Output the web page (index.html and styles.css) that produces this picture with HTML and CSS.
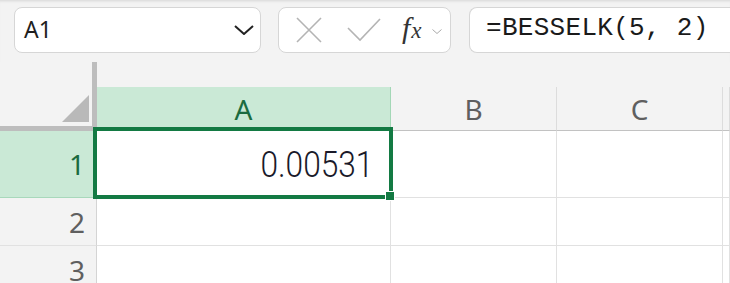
FILE: index.html
```html
<!DOCTYPE html>
<html lang="en">
<head>
    <meta charset="UTF-8">
    <title>BESSELK</title>
    <link rel="stylesheet" href="styles.css">
</head>
<body>
    <div class="toolbar">
        <div class="name-box">
            <span>A1</span>
            <svg class="chevron" viewBox="0 0 20 10" width="20" height="10">
                <path d="M1 1l9 8 9-8" stroke="#222" stroke-width="2" fill="none"/>
            </svg>
        </div>
        <div class="fx-buttons">
            <svg viewBox="0 0 26 26" width="26" height="26">
                <path d="M1 1l24 24M25 1L1 25" stroke="#b4b4b4" stroke-width="1.6" fill="none"/>
            </svg>
            <svg viewBox="0 0 34 24" width="34" height="24">
                <path d="M1 10l12 12L33 1" stroke="#b4b4b4" stroke-width="1.6" fill="none"/>
            </svg>
            <span class="fx"><i>f</i><span class="fx-x">x</span></span>
            <svg class="small-chevron" viewBox="0 0 10 5" width="10" height="5">
                <path d="M0.5 0.5l4.5 4 4.5-4" stroke="#aaa" stroke-width="1" fill="none"/>
            </svg>
        </div>
        <div class="formula-box">=BESSELK(5, 2)</div>
    </div>

    <div class="grid">
        <div class="corner"><div class="triangle"></div></div>
        <div class="col-head active">A</div>
        <div class="col-head">B</div>
        <div class="col-head">C</div>
        <div class="col-head"></div>

        <div class="row-head active">1</div>
        <div class="cell selected">
            <span class="value">0.00531</span>
            <div class="selection"><div class="handle"></div></div>
        </div>
        <div class="cell"></div>
        <div class="cell"></div>
        <div class="cell"></div>

        <div class="row-head">2</div>
        <div class="cell"></div>
        <div class="cell"></div>
        <div class="cell"></div>
        <div class="cell"></div>

        <div class="row-head">3</div>
        <div class="cell"></div>
        <div class="cell"></div>
        <div class="cell"></div>
        <div class="cell"></div>
    </div>
</body>
</html>
```

FILE: styles.css
```css
* {
    box-sizing: border-box;
}

body {
    margin: 0;
    background-color: #f3f3f3;
    font-family: "Noto Sans", "Liberation Sans", sans-serif;
    overflow: hidden;
    width: 730px;
    height: 283px;
}

.toolbar {
    display: flex;
    align-items: flex-start;
    height: 62px;
    padding: 7px 0 0 14px;
    box-shadow: inset 0 3px 3px -2px rgba(0, 0, 0, 0.12);
}

.name-box,
.fx-buttons,
.formula-box {
    flex-shrink: 0;
    height: 46px;
    background-color: #fff;
    border: 1.5px solid #d6d6d6;
    border-radius: 8px;
    display: flex;
    align-items: center;
}

.name-box {
    width: 247px;
    padding: 0 6px 0 9px;
    justify-content: space-between;
    font-size: 23px;
    color: #1f1f1f;
}

.name-box span {
    margin-top: -2px;
}

.fx-buttons {
    width: 173px;
    margin-left: 17px;
    padding-left: 17px;
}

.fx-buttons svg:nth-child(2) {
    margin-left: 25px;
}

.fx {
    margin-left: 21px;
    margin-top: -4px;
    font-family: "Liberation Serif", serif;
    font-size: 30px;
    color: #333;
    line-height: 1;
}

.fx-x {
    font-family: "Liberation Serif", serif;
    font-style: italic;
    font-size: 23px;
    margin-left: 1px;
}

.small-chevron {
    margin-left: 10px;
    margin-top: 2px;
}

.formula-box {
    flex: 1;
    margin-left: 18px;
    padding: 0 0 4px 16px;
    border-right: none;
    border-radius: 8px 0 0 8px;
    font-family: "Liberation Mono", monospace;
    font-size: 26px;
    letter-spacing: 0.3px;
    color: #1a1a1a;
}

.grid {
    display: grid;
    grid-template-columns: 97px 294px 166px 166px 1fr;
    grid-template-rows: 69px 67px 48px 48px;
}

.corner {
    border-right: 5px solid #bdbdbd;
    border-bottom: 5px solid #bdbdbd;
    display: flex;
    align-items: flex-end;
    justify-content: flex-end;
    padding: 0 3px 4px 0;
}

.triangle {
    width: 27px;
    height: 27px;
    background-color: #b9b9b9;
    clip-path: polygon(100% 0, 100% 100%, 0 100%);
}

.col-head {
    align-self: end;
    height: 44px;
    display: flex;
    align-items: center;
    justify-content: center;
    border-right: 1px solid #dcdcdc;
    border-bottom: 1px solid #c2c2c2;
    font-size: 28px;
    color: #5f5f5f;
}

.col-head.active {
    background-color: #cae9d6;
    border-right-color: #a3d7b6;
    color: #1b6b40;
}

.row-head {
    display: flex;
    align-items: center;
    justify-content: flex-end;
    padding-right: 11px;
    border-right: 1px solid #d4d4d4;
    border-bottom: 1px solid #e1e1e1;
    font-size: 28px;
    color: #5f5f5f;
}

.row-head.active {
    background-color: #cae9d6;
    border-bottom-color: #a8d8bb;
    color: #1b6b40;
}

.cell {
    background-color: #fff;
    border-right: 1px solid #e1e1e1;
    border-bottom: 1px solid #e1e1e1;
}

.cell.selected {
    position: relative;
    display: flex;
    align-items: center;
    justify-content: flex-end;
    padding: 2px 17px 0 0;
}

.value {
    display: inline-block;
    font-family: Roboto, "Liberation Sans", sans-serif;
    font-weight: 300;
    font-size: 36px;
    color: #1a1a2a;
    transform: scaleX(0.88);
    transform-origin: right center;
}

.selection {
    position: absolute;
    left: -4px;
    top: -4px;
    right: -3px;
    bottom: -2px;
    border: 4px solid #137a43;
}

.handle {
    position: absolute;
    right: -6px;
    bottom: -6px;
    width: 10px;
    height: 10px;
    background-color: #137a43;
    border: 1px solid #fff;
}
```
